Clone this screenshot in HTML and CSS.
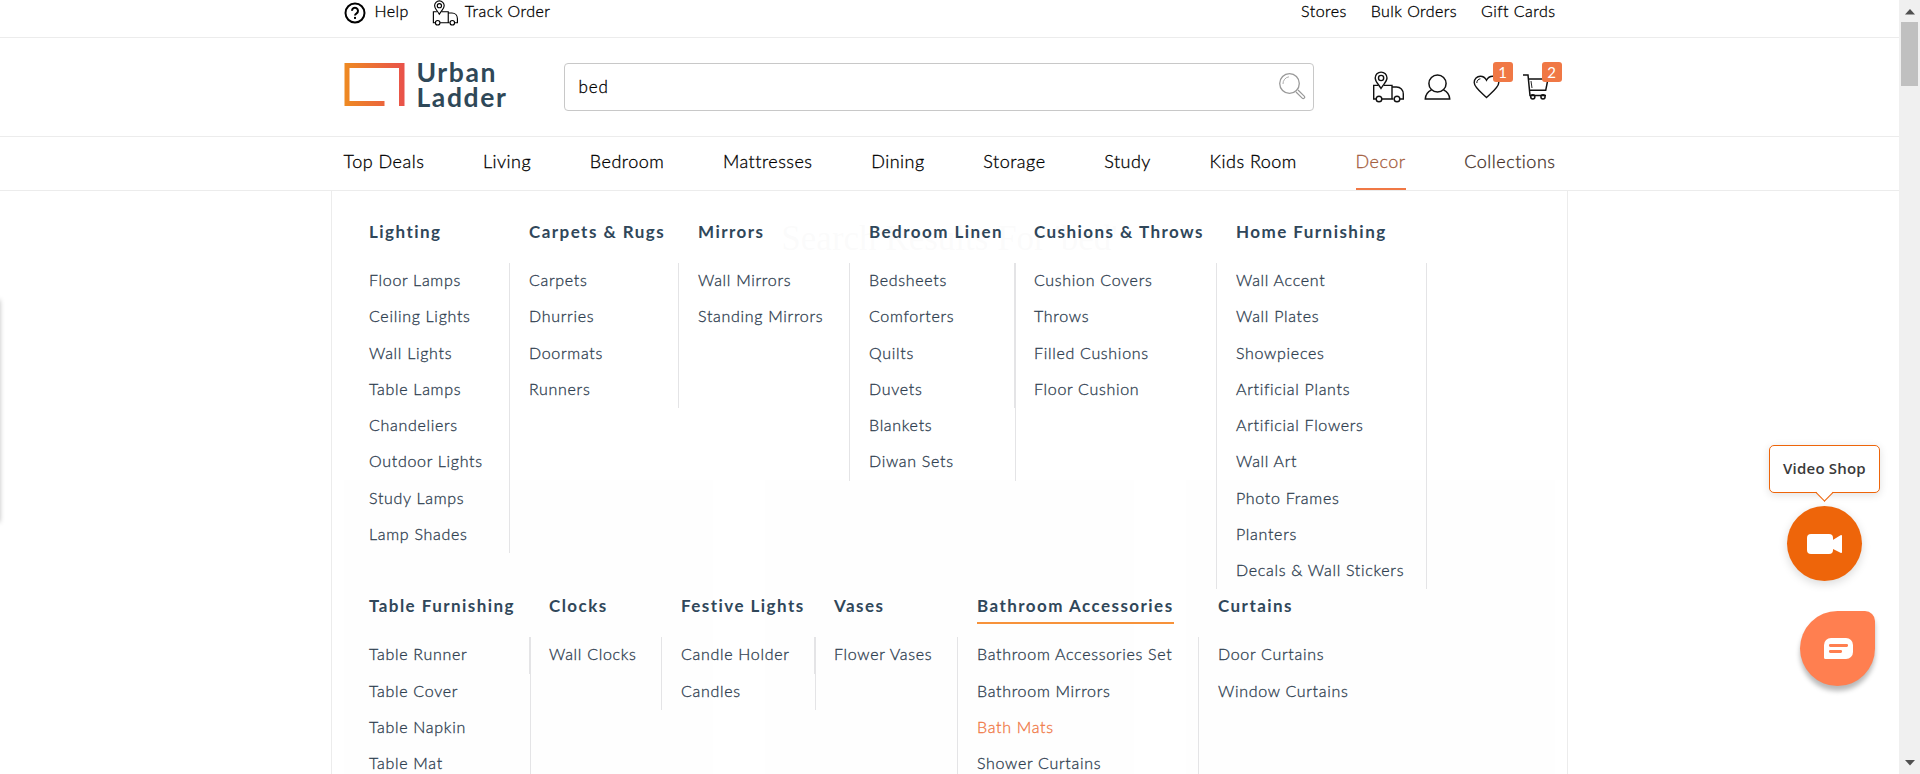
FILE: index.html
```html
<!DOCTYPE html>
<html lang="en">
<head>
<meta charset="utf-8">
<title>Urban Ladder</title>
<link rel="stylesheet" href="styles.css">
</head>
<body>
<svg class="defs" width="0" height="0">
  <symbol id="truck" viewBox="0 0 32 32">
    <g fill="none" stroke="currentColor" stroke-width="1.4">
      <path d="M4 28H1.700V14.400H6M12 14.400h8V28H10M20 28V16h4.500c4 0 6.800 3 6.800 7V28H28M20 28h1.500"/>
      <path d="M9 17.500C6 12.500 3.200 10.500 3.200 7a5.900 5.900 0 0 1 11.800 0c0 3.500-3 5.500-6 10.500z"/>
      <circle cx="9.100" cy="7" r="2.600"/><circle cx="7" cy="28" r="2.800"/><circle cx="25" cy="28" r="2.800"/>
    </g>
  </symbol>
</svg>
<div class="page">
  <header>
    <div class="topbar"><div class="wrap">
      <a class="help"><svg width="22" height="22" viewBox="0 0 22 22"><circle cx="11" cy="11" r="9.500" fill="none" stroke="#000" stroke-width="2"/><path d="M8 8.800a3 3 0 1 1 4.600 2.500C11.500 12 11 12.500 11 13.600" fill="none" stroke="#000" stroke-width="2"/><rect x="10" y="14.900" width="2" height="2"/></svg>Help</a>
      <a class="track"><svg width="26" height="26"><use href="#truck"/></svg>Track Order</a>
      <nav class="toplinks"><a>Stores</a><a>Bulk Orders</a><a>Gift Cards</a></nav>
    </div></div>
    <div class="brandbar"><div class="wrap">
      <a class="logo">
        <svg width="61" height="44" viewBox="0 0 61 44"><defs><linearGradient id="lg" x1="0" x2="1"><stop offset="0" stop-color="#ee8a22"/><stop offset="1" stop-color="#e9524a"/></linearGradient></defs><path d="M0.500 0H60.500V43H55V5H5.500V38H40.500V43H0.500Z" fill="url(#lg)"/></svg>
        <span>Urban<br>Ladder</span>
      </a>
      <div class="search"><span>bed</span>
        <svg width="28" height="28" viewBox="0 0 28 28" fill="none" stroke="#999"><circle cx="11.500" cy="11.500" r="9.800" stroke-width="1.300"/><path d="M5 12a7 7 0 0 1 6-7.200" stroke-width=".8"/><path d="M18 20l6.200 6.200a1.300 1.300 0 0 0 2-2L20 18" stroke-width="1.200"/></svg>
      </div>
      <div class="actions">
        <svg width="32" height="32" class="i-truck"><use href="#truck"/></svg>
        <svg width="27" height="26" viewBox="0 0 27 26" class="i-user" fill="none" stroke="#111" stroke-width="1.500"><circle cx="13.500" cy="9.500" r="8.600"/><path d="M7.500 15.800C4 17.500 1.500 20.500 1.300 24.900h24.400c-.2-4.400-2.700-7.400-6.200-9.100"/></svg>
        <span class="badged heart"><svg width="27" height="24" viewBox="0 0 27 24" fill="none" stroke="#111" stroke-width="1.400"><path d="M13.500 22.500C9 18 1.200 12.500 1.200 7.500c0-3.700 2.800-6.300 6.100-6.300 2.700 0 4.900 1.400 6.200 4 1.300-2.600 3.500-4 6.200-4 3.300 0 6.100 2.600 6.100 6.300 0 5-7.800 10.500-12.300 15z"/><path d="M3.800 8c0-2.400 1.600-4 3.600-4.200" stroke-width="1"/></svg><b>1</b></span>
        <span class="badged cart"><svg width="26" height="26" viewBox="0 0 26 26" fill="none" stroke="#111" stroke-width="1.500"><path d="M0 1h5l2 20.500h16M5.500 5H25l-2.300 11.300H6.500"/><path d="M8 7l1 7" stroke-width=".9"/><circle cx="9.800" cy="22.800" r="2.100"/><circle cx="20" cy="22.800" r="2.100"/></svg><b>2</b></span>
      </div>
    </div></div>
    <nav class="mainnav"><div class="wrap">
      <a>Top Deals</a><a>Living</a><a>Bedroom</a><a>Mattresses</a><a>Dining</a><a>Storage</a><a>Study</a><a>Kids Room</a><a class="active">Decor</a><a class="fade">Collections</a>
    </div></nav>
  </header>
  <main class="results">
    <h1>Search Results For 'bed'</h1>
    <div class="filters"><span>Category</span><span>Price</span><span>Finish</span><span>Material</span><span>Features</span><span>Size</span></div>
    <div class="products"><div></div><div></div><div></div></div>
  </main>
  <section class="mega">
    <div class="row r1">
      <div class="col"><h3><span>Lighting</span></h3><ul><li>Floor Lamps<li>Ceiling Lights<li>Wall Lights<li>Table Lamps<li>Chandeliers<li>Outdoor Lights<li>Study Lamps<li>Lamp Shades</ul></div>
      <div class="col"><h3><span>Carpets &amp; Rugs</span></h3><ul><li>Carpets<li>Dhurries<li>Doormats<li>Runners</ul></div>
      <div class="col"><h3><span>Mirrors</span></h3><ul><li>Wall Mirrors<li>Standing Mirrors</ul></div>
      <div class="col double"><h3><span>Bedroom Linen</span></h3><ul><li>Bedsheets<li>Comforters<li>Quilts<li>Duvets<li>Blankets<li>Diwan Sets</ul></div>
      <div class="col"><h3><span>Cushions &amp; Throws</span></h3><ul><li>Cushion Covers<li>Throws<li>Filled Cushions<li>Floor Cushion</ul></div>
      <div class="col"><h3><span>Home Furnishing</span></h3><ul><li>Wall Accent<li>Wall Plates<li>Showpieces<li>Artificial Plants<li>Artificial Flowers<li>Wall Art<li>Photo Frames<li>Planters<li>Decals &amp; Wall Stickers</ul></div>
    </div>
    <div class="row r2">
      <div class="col double"><h3><span>Table Furnishing</span></h3><ul><li>Table Runner<li>Table Cover<li>Table Napkin<li>Table Mat</ul></div>
      <div class="col"><h3><span>Clocks</span></h3><ul><li>Wall Clocks</ul></div>
      <div class="col double"><h3><span>Festive Lights</span></h3><ul><li>Candle Holder<li>Candles</ul></div>
      <div class="col"><h3><span>Vases</span></h3><ul><li>Flower Vases</ul></div>
      <div class="col current"><h3><span>Bathroom Accessories</span></h3><ul><li>Bathroom Accessories Set<li>Bathroom Mirrors<li class="hot">Bath Mats<li>Shower Curtains</ul></div>
      <div class="col"><h3><span>Curtains</span></h3><ul><li>Door Curtains<li>Window Curtains</ul></div>
    </div>
  </section>
  <div class="edge"></div>
  <div class="tip">Video Shop</div>
  <div class="video"><svg width="36" height="20" viewBox="0 0 36 20" fill="#fff"><rect width="26" height="20" rx="4"/><path d="M25 6.500L33.500 1.200Q35 .4 35 2V18q0 1.600-1.500 .8L25 14.500z"/></svg></div>
  <div class="chat"><svg width="29" height="21" viewBox="0 0 29 21"><path d="M7 0h15a7 7 0 0 1 7 7v7a7 7 0 0 1-7 7H1.500A1.500 1.500 0 0 1 0 19.500V7a7 7 0 0 1 7-7z" fill="#fff"/><path d="M6.300 7.500h16.400M6.300 13.500h10.400" stroke="#ff7f50" stroke-width="2.800" stroke-linecap="round"/></svg></div>
</div>
<aside class="scrollbar">
  <svg width="10" height="6" viewBox="0 0 10 6"><path d="M0 5.500L5 0l5 5.500z" fill="#505050"/></svg>
  <div class="thumb"></div>
  <svg class="down" width="10" height="6" viewBox="0 0 10 6"><path d="M0 0h10L5 5.500z" fill="#505050"/></svg>
</aside>
</body>
</html>
```
FILE: styles.css
```css
* { box-sizing: border-box; }
body { margin: 0; display: flex; width: 1920px; height: 774px; overflow: hidden; background: #fff; font-family: Lato, sans-serif; font-weight: 300; color: #000; }
.defs { position: absolute; }
.page { position: relative; width: 1899px; height: 774px; overflow: hidden; }
.wrap { width: 1212px; height: 100%; margin: 0 auto; display: flex; align-items: center; }
.topbar, .search, .mainnav, .mega li { -webkit-text-stroke: .3px currentColor; }

.topbar { height: 38px; border-bottom: 1px solid #ececec; font-size: 16px; letter-spacing: .45px; }
.topbar .wrap { align-items: flex-start; line-height: 22px; }
.topbar a { display: flex; align-items: center; white-space: nowrap; }
.topbar .help { gap: 9px; margin-right: 23px; }
.help, .track { height: 22px; }
.help svg { margin-top: 3px; }
.track { gap: 7px; }
.track svg { margin-top: 3px; }
.toplinks { display: flex; gap: 24px; margin-left: auto; }

.brandbar { height: 99px; border-bottom: 1px solid #ececec; }
.brandbar .wrap { align-items: flex-start; padding-top: 25px; }
.logo { display: flex; width: 220px; }
.logo span { margin: -3px 0 0 12px; font-size: 26.5px; line-height: 25px; font-weight: 700; letter-spacing: 1.6px; color: #2f4858; }
.search { display: flex; align-items: center; justify-content: space-between; width: 750px; height: 48px; padding: 0 7px 2px 14px; border: 1px solid #c8c8c8; border-radius: 4px; font-size: 17px; letter-spacing: .9px; }
.actions { display: flex; align-items: flex-start; margin-left: 58px; color: #111; }
.i-truck { margin-top: 8px; }
.i-user { margin: 11px 0 0 20px; }
.badged { position: relative; display: block; }
.heart { margin: 12px 0 0 22px; }
.cart { margin: 11px 0 0 23px; }
.badged b { position: absolute; left: 20px; top: -13px; width: 20px; height: 20px; border-radius: 3px; background: #f07845; color: #fff; font-size: 15px; line-height: 20px; font-weight: 400; text-align: center; }
.cart b { left: 19px; top: -12px; }

.mainnav { height: 54px; border-bottom: 1px solid #ececec; font-size: 18px; letter-spacing: .5px; }
.mainnav .wrap { justify-content: space-between; }
.mainnav a { height: 53px; line-height: 48px; border-bottom: 2px solid transparent; white-space: nowrap; }
.mainnav .active { color: #a5603f; border-color: #f07845; }
.mainnav .fade { color: #47322a; }

.results { width: 1212px; margin: 0 auto; }
.results h1 { margin: 28px 0 0; font: 400 35px/40px "Liberation Serif", serif; text-align: center; color: #333; }
.filters { display: flex; gap: 11px; margin-top: 93px; }
.filters span { width: 104px; height: 36px; border-radius: 4px; background: #f5e9da; line-height: 36px; text-align: center; color: #fff; }
.products { display: flex; gap: 52px; margin-top: 92px; }
.products div { width: 369px; height: 294px; background: #ccc; }

.mega { position: absolute; left: 331px; top: 191px; width: 1237px; height: 583px; padding: 24px 0 0 17px; border: 1px solid #ececec; border-width: 0 1px; background: rgba(255,255,255,.98); }
.row { display: grid; color: #2f4050; }
.r1 { grid-template-columns: 160px 169px 171px 165px 202px 210px; }
.r2 { grid-template-columns: 180px 132px 153px 143px 241px 211px; }
.mega h3 { height: 48px; margin: 0 0 0 20px; font-size: 17px; font-weight: 700; letter-spacing: 1.45px; color: #30475a; white-space: nowrap; }
.mega h3 span { display: inline-block; height: 35px; line-height: 33px; }
.mega ul { margin: 0 -1px 0 0; padding: 0 0 0 19px; list-style: none; border: 1px solid #e4e4e6; border-width: 0 1px; }
.row .col:first-child ul { border-left-color: transparent; }
.double ul { margin-right: -2px; }
.r2 .col:last-child ul { border-right: 0; }
.mega li { height: 36.25px; line-height: 34px; font-size: 16px; letter-spacing: .7px; white-space: nowrap; }
.r2 li { line-height: 33px; }
.mega .current h3 span { border-bottom: 2px solid #f7923a; }
.mega .hot { color: #f07845; }

.edge { position: absolute; left: -10px; top: 300px; width: 10px; height: 222px; box-shadow: 0 0 5px rgba(0,0,0,.25); }
.tip { position: absolute; left: 1769px; top: 445px; width: 111px; height: 48px; border: 1px solid #ee650a; border-radius: 5px; background: #fff; box-shadow: 0 2px 8px rgba(0,0,0,.12); color: #3a3a3a; font: 600 15px/44px "Open Sans", sans-serif; letter-spacing: .2px; text-align: center; }
.tip::after { content: ""; position: absolute; left: 48px; top: 40px; width: 12px; height: 12px; border: solid #ee650a; border-width: 0 1px 1px 0; background: linear-gradient(135deg, transparent 45%, #fff 45%); transform: rotate(45deg); }
.video, .chat { position: absolute; display: grid; place-items: center; width: 75px; height: 75px; }
.video { left: 1787px; top: 506px; border-radius: 50%; background: #ee650a; box-shadow: 0 3px 10px rgba(0,0,0,.15); }
.chat { left: 1800px; top: 611px; padding-left: 2px; border-radius: 50% 10px 50% 50%; background: #ff7f50; box-shadow: 0 5px 5px rgba(0,0,0,.28); }

.scrollbar { display: flex; flex-direction: column; align-items: center; width: 21px; height: 774px; padding: 9px 0 8px; background: #f0f0f0; }
.thumb { width: 17px; height: 64px; margin-top: 7px; background: #c0c0c0; }
.down { margin-top: auto; }
```
